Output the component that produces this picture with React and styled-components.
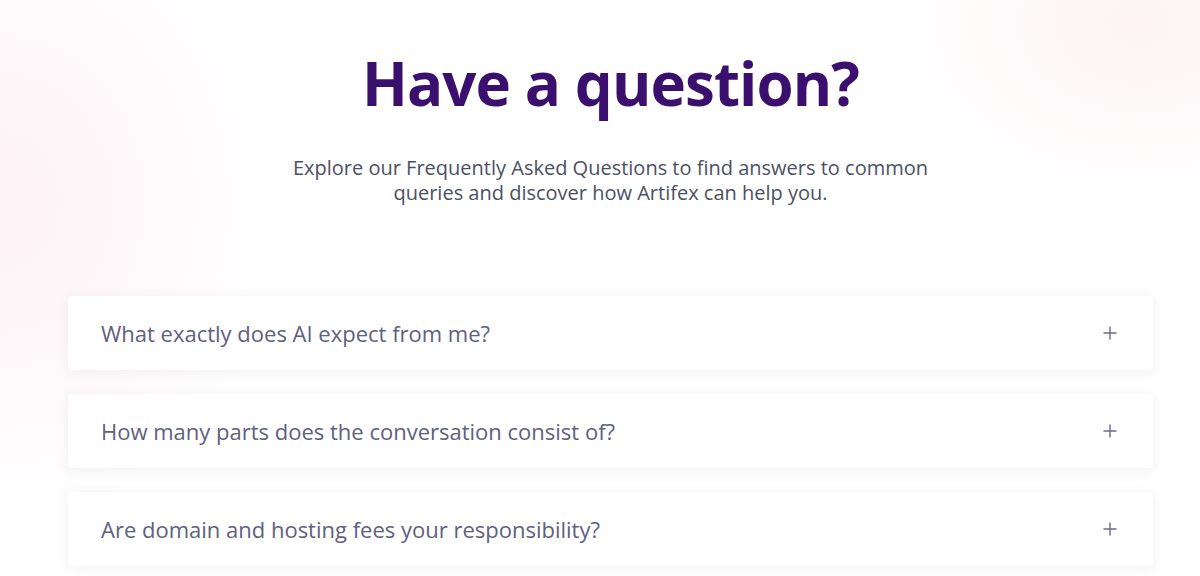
import React from 'react';
import styled, { createGlobalStyle } from 'styled-components';

const GlobalStyle = createGlobalStyle`
  html, body {
    margin: 0;
    padding: 0;
  }
  body {
    font-family: "Open Sans", "Noto Sans", sans-serif;
    background: #ffffff;
  }
`;

const questions = [
  'What exactly does AI expect from me?',
  'How many parts does the conversation consist of?',
  'Are domain and hosting fees your responsibility?',
];

const PlusIcon = () => (
  <svg width="16" height="16" viewBox="0 0 16 16" fill="none">
    <path d="M8 1.5v13M1.5 8h13" stroke="#6a6a8e" strokeWidth="1.4" />
  </svg>
);

const App = () => (
  <Page>
    <GlobalStyle />
    <Section>
      <Title>Have a question?</Title>
      <Lead>
        Explore our Frequently Asked Questions to find answers to common
        <br />
        queries and discover how Artifex can help you.
      </Lead>
      <List>
        {questions.map((q) => (
          <Item key={q}>
            <Question>{q}</Question>
            <Toggle aria-label="Expand">
              <PlusIcon />
            </Toggle>
          </Item>
        ))}
      </List>
    </Section>
  </Page>
);

export default App;

const Page = styled.div`
  min-height: 576px;
  overflow: hidden;
  background:
    radial-gradient(ellipse 400px 460px at 0% 35%, rgba(252, 236, 241, 0.7), rgba(255, 255, 255, 0) 70%),
    radial-gradient(ellipse 360px 260px at 95% 4%, rgba(252, 238, 240, 0.7), rgba(255, 255, 255, 0) 70%),
    #ffffff;
`;

const Section = styled.section`
  width: 1085px;
  margin-left: 68px;
  padding-top: 41px;
  display: flex;
  flex-direction: column;
  align-items: center;
`;

const Title = styled.h1`
  margin: 0;
  font-size: 60px;
  line-height: 84px;
  font-weight: 700;
  letter-spacing: -0.9px;
  color: #3a0f6d;
`;

const Lead = styled.p`
  margin: 30px 0 0;
  font-size: 20px;
  line-height: 25px;
  font-weight: 400;
  color: #4b5163;
  text-align: center;
`;

const List = styled.div`
  margin-top: 91px;
  width: 100%;
  display: flex;
  flex-direction: column;
  gap: 24px;
`;

const Item = styled.div`
  height: 74px;
  box-sizing: border-box;
  padding: 0 33px;
  display: flex;
  align-items: center;
  justify-content: space-between;
  background: #ffffff;
  border-radius: 4px;
  box-shadow: 0 2px 14px rgba(60, 40, 90, 0.07);
`;

const Question = styled.span`
  font-size: 22px;
  color: #60607f;
`;

const Toggle = styled.span`
  display: flex;
  align-items: center;
  justify-content: center;
  margin-right: 2px;
`;
